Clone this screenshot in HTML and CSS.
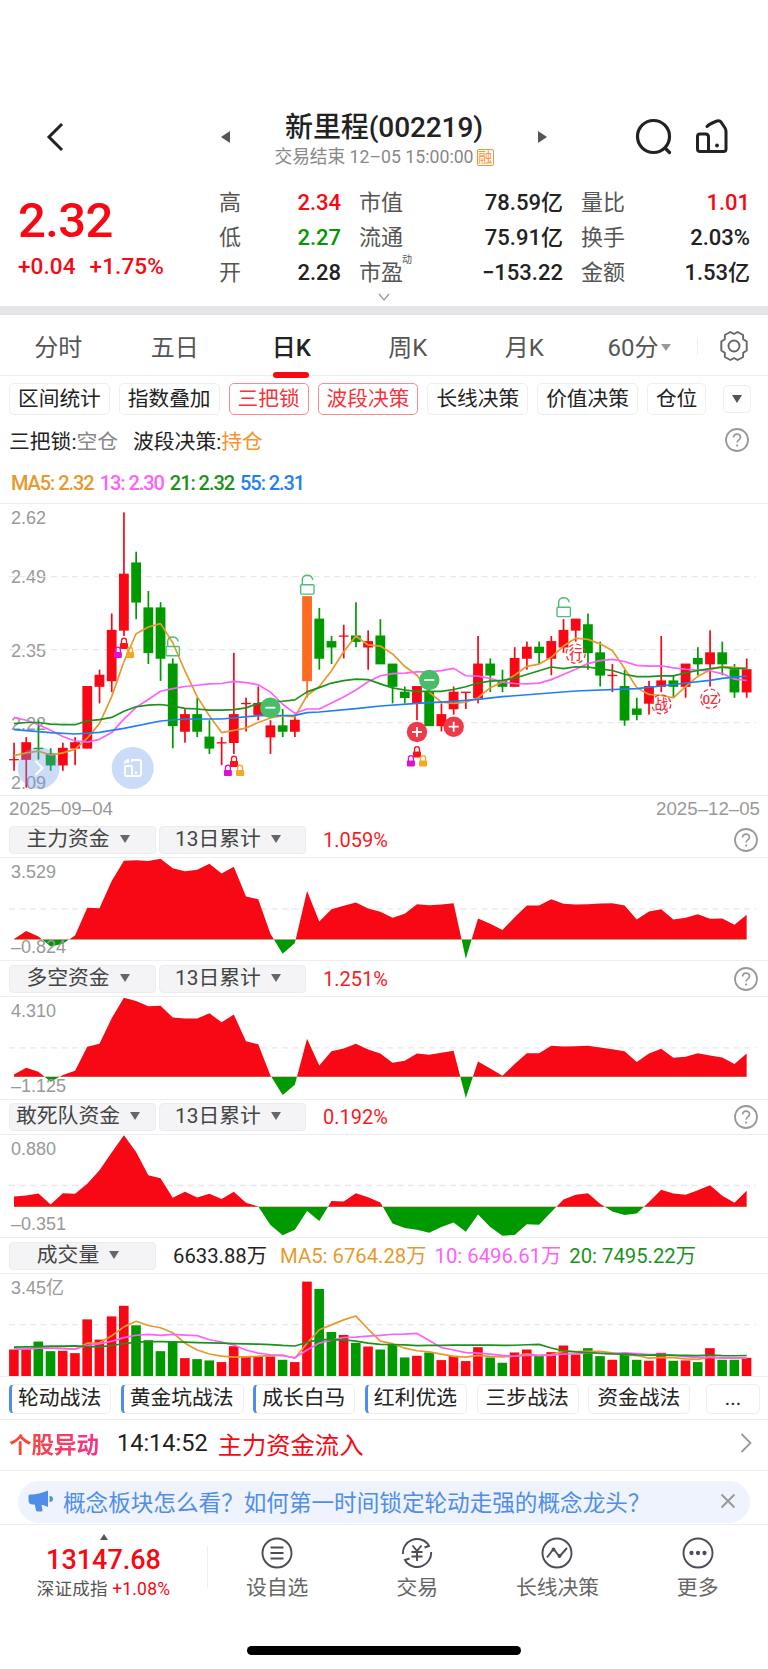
FILE: index.html
```html
<!DOCTYPE html>
<html lang="zh-CN">
<head>
  <meta charset="UTF-8" />
  <meta name="viewport" content="width=device-width, initial-scale=1.0" />
  <title>新里程(002219)</title>
  <link rel="stylesheet" href="styles.css">
</head>
<body>
  <svg class="defs" width="0" height="0">
    <symbol id="help" viewBox="0 0 26 26">
      <circle cx="13" cy="13" r="11" fill="none" stroke="#999" stroke-width="1.8"/>
      <path d="M9.600 10.600c0-4.600 6.900-4.600 6.900-.4 0 2.600-3.400 2.700-3.400 5.400" fill="none" stroke="#999" stroke-width="1.700"/>
      <circle cx="13.100" cy="18.600" r="1.100" fill="#999"/>
    </symbol>
  </svg>

  <header>
    <svg class="back" viewBox="0 0 20 32"><path d="M17 3 4 16l13 13" fill="none" stroke="#222" stroke-width="3"/></svg>
    <i class="tri-left"></i>
    <div class="title">
      <h1>新里程(002219)</h1>
      <p>交易结束 12–05 15:00:00<span class="badge">融</span></p>
    </div>
    <i class="tri-right"></i>
    <svg class="search" viewBox="0 0 38 38"><circle cx="18.500" cy="18.500" r="16" fill="none" stroke="#222" stroke-width="3.200"/><path d="M30 30l4.500 4.500" stroke="#222" stroke-width="3.200" stroke-linecap="round"/></svg>
    <svg class="home" viewBox="0 0 34 36"><path d="M12 8.500q2-2.500 10-5.500 2.500-1 4 1l4 6q1 1.500 1 3.500v17.500q0 2.500-2.500 2.500H5Q2.500 33.500 2.500 31V18.500q0-2.500 2.500-2.500h5.500q3 0 3 3v14.500" fill="none" stroke="#222" stroke-width="3" stroke-linecap="round"/><circle cx="22" cy="27.500" r="1.900" fill="#222"/></svg>
  </header>

  <section class="quote">
    <div class="price">
      <b>2.32</b>
      <p>+0.04<span>+1.75%</span></p>
    </div>
    <dl>
      <dt>高</dt><dd class="red">2.34</dd><dt>市值</dt><dd>78.59亿</dd><dt>量比</dt><dd class="red">1.01</dd>
      <dt>低</dt><dd class="green">2.27</dd><dt>流通</dt><dd>75.91亿</dd><dt>换手</dt><dd>2.03%</dd>
      <dt>开</dt><dd>2.28</dd><dt>市盈<sup>动</sup></dt><dd>−153.22</dd><dt>金额</dt><dd>1.53亿</dd>
    </dl>
    <svg class="more" viewBox="0 0 12 8"><path d="M1 1l5 6 5-6" fill="none" stroke="#999" stroke-width="1.300"/></svg>
  </section>

  <nav class="tabs">
    <a>分时</a><a>五日</a><a class="active">日K</a><a>周K</a><a>月K</a>
    <a class="minute">60分<i></i></a>
    <span class="gear"><svg viewBox="0 0 32 32"><path d="M12.400 2 16 4l3.600-2 5.500 3 .1 4.200 3.500 2.300v9l-3.500 2.300-.1 4.200-5.500 3L16 28l-3.600 2-5.500-3-.1-4.200-3.500-2.300v-9l3.500-2.300.1-4.200z" fill="none" stroke="#666" stroke-width="1.900" stroke-linejoin="round"/><circle cx="16" cy="16" r="5.500" fill="none" stroke="#666" stroke-width="1.900"/></svg></span>
  </nav>

  <div class="chips">
    <span>区间统计</span><span>指数叠加</span><span class="on">三把锁</span><span class="on">波段决策</span><span>长线决策</span><span>价值决策</span><span>仓位</span><span class="drop"><i class="down"></i></span>
  </div>
  <div class="status">
    三把锁:<em>空仓</em><span>波段决策:<em class="hold">持仓</em></span>
    <svg class="help"><use href="#help"/></svg>
  </div>
  <div class="ma">
    <span class="c5">MA5: 2.32</span><span class="c13">13: 2.30</span><span class="c21">21: 2.32</span><span class="c55">55: 2.31</span>
  </div>

  <div class="kline"><svg id="kline" viewBox="0 4 768 291"></svg></div>
  <div class="dates"><span>2025–09–04</span><span>2025–12–05</span></div>

  <section class="panel">
    <div class="bar">
      <span class="pill">主力资金<i class="down"></i></span><span class="pill">13日累计<i class="down"></i></span>
      <b>1.059%</b><svg class="help"><use href="#help"/></svg>
    </div>
    <div class="plot"><span class="max">3.529</span><svg id="fund1" preserveAspectRatio="none"></svg><span class="min">–0.824</span></div>
  </section>
  <section class="panel">
    <div class="bar">
      <span class="pill">多空资金<i class="down"></i></span><span class="pill">13日累计<i class="down"></i></span>
      <b>1.251%</b><svg class="help"><use href="#help"/></svg>
    </div>
    <div class="plot"><span class="max">4.310</span><svg id="fund2" preserveAspectRatio="none"></svg><span class="min">–1.125</span></div>
  </section>
  <section class="panel">
    <div class="bar">
      <span class="pill">敢死队资金<i class="down"></i></span><span class="pill">13日累计<i class="down"></i></span>
      <b>0.192%</b><svg class="help"><use href="#help"/></svg>
    </div>
    <div class="plot"><span class="max">0.880</span><svg id="fund3" preserveAspectRatio="none"></svg><span class="min">–0.351</span></div>
  </section>
  <section class="panel">
    <div class="bar volbar">
      <span class="pill">成交量<i class="down"></i></span>
      <span class="v0">6633.88万</span><span class="c5">MA5: 6764.28万</span><span class="c13">10: 6496.61万</span><span class="c21">20: 7495.22万</span>
    </div>
    <div class="plot"><span class="max">3.45亿</span><svg id="volume" preserveAspectRatio="none"></svg></div>
  </section>

  <div class="chips tactics">
    <span class="hot">轮动战法</span><span class="hot">黄金坑战法</span><span class="hot">成长白马</span><span class="hot">红利优选</span><span>三步战法</span><span>资金战法</span><span class="dots">...</span>
  </div>

  <div class="alert">
    <b>个股异动</b><time>14:14:52</time><span>主力资金流入</span>
    <svg viewBox="0 0 12 20"><path d="M1.500 1l9 9-9 9" fill="none" stroke="#999" stroke-width="1.800"/></svg>
  </div>

  <div class="tip">
    <div>
      <svg class="horn" viewBox="0 0 26 22"><path d="M2 4.500q7 .5 18-4v16.500q-4-2-6.500-2.300l1 5.300q0 1.500-1.500 1.500H9.500q-1.200 0-1.500-1.200L6.800 14.500H4Q.5 14 .5 10V6Q.5 4.500 2 4.500zM21.500 6q3.500 0 3.500 3t-3.500 3z" fill="#508de8"/></svg>
      <p>概念板块怎么看？如何第一时间锁定轮动走强的概念龙头？</p>
      <svg class="close" viewBox="0 0 16 16"><path d="M1.500 1.500l13 13m0-13l-13 13" stroke="#999" stroke-width="1.900"/></svg>
    </div>
  </div>

  <footer>
    <div class="index">
      <i class="up"></i>
      <b>13147.68</b>
      <p>深证成指 <span>+1.08%</span></p>
    </div>
    <a><svg viewBox="0 0 32 32"><circle cx="16" cy="16" r="14.500"/><path d="M9.500 10.500h13M9.500 16h13M9.500 21.500h13"/></svg>设自选</a>
    <a><svg viewBox="0 0 32 32"><path d="M1.800 17A14.300 14.300 0 0 1 26.500 6.500l1.500 2.500-4.500 1.500M30.200 15A14.300 14.300 0 0 1 5.500 25.500L4 23l4.500-1.500M11.500 8.500 16 14l4.500-5.500M16 14v10M10.500 15h11M10.500 19.500h11"/></svg>交易</a>
    <a><svg viewBox="0 0 32 32"><circle cx="16" cy="16" r="14.500"/><path d="M6 20.500l6.500-8.500 6 7.500 7.500-8.500"/><circle cx="12.500" cy="12.500" r="1"/><circle cx="18.500" cy="19" r="1"/></svg>长线决策</a>
    <a><svg viewBox="0 0 32 32"><circle cx="16" cy="16" r="14.500"/><g class="fill"><circle cx="9.500" cy="16" r="1.200"/><circle cx="16" cy="16" r="1.200"/><circle cx="22.500" cy="16" r="1.200"/></g></svg>更多</a>
  </footer>
  <div class="homebar"></div>

  <script src="script.js"></script>
</body>
</html>
```
FILE: styles.css
```css
* {
  box-sizing: border-box;
}
body {
  margin: 0;
  width: 768px;
  height: 1669px;
  overflow: hidden;
  background: #fff;
  color: #222;
  font-family: Roboto, 'Noto Sans CJK SC', sans-serif;
  white-space: nowrap;
}
h1, p, dl, dd {
  margin: 0;
}
em, i {
  font-style: normal;
}
svg {
  display: block;
  flex: none;
}
.defs {
  position: absolute;
}
.red { color: #f70814; }
.green { color: #009a00; }
.c5 { color: #e69a2e; }
.c13 { color: #fb62fb; }
.c21 { color: #1c921c; }
.c55 { color: #1f80f5; }

header {
  height: 182px;
  padding: 104px 0 0 45px;
  display: flex;
  align-items: center;
}
.back {
  width: 20px;
  height: 32px;
  margin-top: -13px;
}
.tri-left, .tri-right {
  border: 6px solid transparent;
  margin-top: -12px;
}
.tri-left {
  border-right: 9px solid #555;
  border-left: 0;
  margin-left: 156px;
}
.tri-right {
  border-left: 9px solid #555;
  border-right: 0;
}
.title {
  width: 308px;
  text-align: center;
  margin-top: -9px;
}
h1 {
  font-size: 28px;
  line-height: 36px;
  font-weight: 500;
  letter-spacing: -0.1px;
}
.title p {
  font-size: 17.700px;
  line-height: 22px;
  color: #888;
}
.badge {
  display: inline-block;
  width: 17px;
  height: 17px;
  border: 1px solid #f9923a;
  border-radius: 2px;
  margin-left: 3px;
  font-size: 14px;
  line-height: 15px;
  color: #f9923a;
  vertical-align: 1px;
}
.search {
  width: 38px;
  height: 38px;
  margin: -12px 0 0 88px;
}
.home {
  width: 34px;
  height: 36px;
  margin: -14px 0 0 22px;
}

.quote {
  position: relative;
  height: 133px;
  display: flex;
  border-bottom: 9px solid #e5e5e7;
}
.price {
  width: 219px;
  padding: 12px 0 0 18px;
  color: #f70814;
}
.price b {
  display: block;
  font-size: 49px;
  line-height: 54px;
  font-weight: 500;
  letter-spacing: -0.6px;
}
.price p {
  font-size: 22.500px;
  line-height: 37px;
  font-weight: 500;
  letter-spacing: 0.1px;
}
.price span {
  margin-left: 14px;
}
dl {
  width: 531px;
  height: 106px;
  padding-top: 3px;
  display: grid;
  grid-template-columns: 50px 72px 64px 158px 62px 1fr;
  grid-template-rows: repeat(3, 35px);
  line-height: 35px;
  font-size: 22px;
}
dt {
  color: #555;
}
dd {
  text-align: right;
  font-weight: 500;
}
dt:nth-of-type(3n+2), dt:nth-of-type(3n) {
  padding-left: 18px;
}
sup {
  position: absolute;
  font-size: 10px;
  line-height: 12px;
  margin: -1px 0 0 -1px;
}
.more {
  position: absolute;
  left: 378px;
  bottom: 5px;
  width: 12px;
  height: 8px;
}

.tabs {
  height: 61px;
  display: flex;
  border-bottom: 1.500px solid #eee;
}
.tabs a {
  width: 116.500px;
  text-align: center;
  font-size: 24px;
  line-height: 66px;
  color: #555;
  position: relative;
}
.tabs .active {
  color: #222;
  font-weight: 500;
}
.tabs .active::after {
  content: '';
  position: absolute;
  left: 40px;
  bottom: -3px;
  width: 36px;
  height: 6px;
  border-radius: 3px;
  background: #f70814;
}
.tabs .minute {
  width: 114px;
}
.minute i {
  display: inline-block;
  border: 5px solid transparent;
  border-top: 7px solid #999;
  border-bottom: 0;
  margin-left: 3px;
  vertical-align: 5px;
}
.gear {
  width: 71px;
  padding-left: 20px;
  height: 18px;
  margin-top: 22px;
  border-left: 1px solid #eee;
}
.gear svg {
  width: 32px;
  height: 32px;
  margin-top: -7px;
}

.chips {
  height: 46px;
  padding: 7px 0 0 9px;
  display: flex;
  gap: 9px;
}
.chips span {
  height: 32px;
  padding: 0 8px;
  border: 1.500px solid #eee;
  border-radius: 5px;
  font-size: 20.700px;
  line-height: 30px;
}
.chips .on {
  color: #f8323d;
  border-color: #fb8a90;
}
.down {
  display: inline-block;
  border: 5px solid transparent;
  border-top: 8px solid #555;
  border-bottom: 0;
}
.chips .drop {
  width: 28px;
  height: 28px;
  margin: 2px 0 0 8px;
  display: flex;
  align-items: center;
  justify-content: center;
}
.status {
  height: 39px;
  padding: 0 18px 3px 9px;
  display: flex;
  align-items: center;
  font-size: 20.800px;
}
.status em {
  color: #888;
}
.status span {
  margin-left: 15px;
}
.status .hold {
  color: #f9922a;
}
.help {
  width: 26px;
  height: 26px;
  margin-left: auto;
}
.ma {
  height: 42px;
  padding-left: 11px;
  display: flex;
  gap: 6px;
  font-size: 20px;
  line-height: 44px;
  font-weight: 500;
  letter-spacing: -1.060px;
}

.kline {
  height: 293px;
  border-top: 1.500px solid #eee;
  border-bottom: 1.500px solid #eee;
}
#kline {
  width: 768px;
  height: 291px;
}
#kline .axis {
  font: 18px 'Liberation Sans', sans-serif;
  fill: #999;
}
.dates {
  height: 26.500px;
  padding: 0 8px 0 9px;
  display: flex;
  justify-content: space-between;
  font: 18.700px/26px 'Liberation Sans', sans-serif;
  color: #999;
}

.panel {
  height: 138.500px;
}
.bar {
  height: 35.500px;
  padding: 1px 9px 0 9px;
  display: flex;
  align-items: center;
  border-bottom: 1.500px solid #eee;
}
.bar b {
  margin-left: 14px;
  font-size: 20px;
  font-weight: 400;
  color: #f81925;
}
.pill {
  width: 147px;
  height: 28px;
  margin-right: 3px;
  padding-right: 9px;
  border: 1px solid #ececef;
  border-radius: 4px;
  background: #f4f4f6;
  font-size: 20.800px;
  line-height: 25px;
  text-align: center;
  color: #444;
}
.pill .down {
  border-top-color: #666;
  margin-left: 10px;
  vertical-align: 3px;
}
.plot {
  position: relative;
  height: 103px;
  border-bottom: 1.500px solid #eee;
}
.plot svg {
  width: 768px;
  height: 102px;
}
.plot span {
  position: absolute;
  left: 11px;
  font: 18px/18px 'Liberation Sans', 'Noto Sans CJK SC', sans-serif;
  color: #999;
}
.max {
  top: 5px;
}
.min {
  bottom: 4px;
}
.volbar {
  font-size: 20.300px;
}
.volbar > span:not(.pill) {
  margin-top: -3px;
}
.volbar .v0 { margin-left: 14px; }
.volbar .c5 { margin-left: 13px; }
.volbar .c13, .volbar .c21 { margin-left: 8px; }

.tactics {
  height: 43px;
  gap: 9.500px;
  border-bottom: 1.500px solid #eee;
}
.tactics span {
  height: 30px;
  line-height: 27px;
  padding-right: 9px;
  font-size: 20.800px;
}
.tactics .hot {
  border-left: 3px solid #508de8;
  padding-left: 6px;
}
.tactics .dots {
  width: 54px;
  margin-left: 6px;
  padding-left: 9px;
  text-align: center;
}

.alert {
  height: 51.500px;
  padding: 0 16px 3px 9px;
  display: flex;
  align-items: center;
  border-bottom: 1.500px solid #eceef4;
  font-size: 24.300px;
}
.alert b {
  font-size: 22.500px;
  background: linear-gradient(90deg, #fb4a2c, #f2348a);
  -webkit-background-clip: text;
  color: transparent;
}
.alert time {
  margin-left: 18px;
  font-size: 23.500px;
}
.alert span {
  margin-left: 10px;
  color: #f70814;
}
.alert svg {
  width: 12px;
  height: 20px;
  margin-left: auto;
}
.tip {
  height: 54px;
  padding: 10px 18px 0;
  border-bottom: 1.500px solid #eee;
}
.tip div {
  height: 42px;
  padding: 0 14px 2px 10px;
  display: flex;
  align-items: center;
  border-radius: 21px;
  background: #eef3fd;
  color: #508de8;
  font-size: 22.600px;
}
.tip p {
  margin-left: 9px;
  font-family: 'Noto Sans CJK SC', sans-serif;
}
.horn {
  width: 26px;
  height: 22px;
}
.close {
  width: 16px;
  height: 16px;
  margin-left: auto;
}

footer {
  height: 121px;
  display: flex;
}
.index {
  width: 207px;
  height: 90px;
  text-align: center;
  color: #f70814;
}
.up {
  display: block;
  width: 0;
  margin: 9px auto 0;
  border: 4px solid transparent;
  border-bottom: 6px solid #555;
  border-top: 0;
}
.index b {
  display: block;
  font-size: 27px;
  line-height: 40px;
  font-weight: 500;
}
.index p {
  font-size: 17.500px;
  line-height: 18px;
  letter-spacing: 0.200px;
  color: #555;
}
.index span {
  color: #f70814;
}
footer a {
  width: 140.200px;
  padding-top: 12px;
  text-align: center;
  font-size: 20.800px;
  line-height: 34px;
  color: #666;
}
footer a svg {
  width: 32px;
  height: 32px;
  margin: 0 auto 2px;
  fill: none;
  stroke: #4c4c58;
  stroke-width: 1.900;
}
footer .fill circle {
  fill: #4c4c58;
}
.index + a {
  background: linear-gradient(#eee, #eee) 0 21px / 1px 42px no-repeat;
}
.homebar {
  width: 274px;
  height: 9px;
  margin: 0 auto;
  border-radius: 5px;
  background: #000;
}
```
FILE: script.js
```js
const RED = "#f70814";
const GREEN = "#009a00";
const xAt = i => 14 + i * 12.211;

// [colour, body top, body bottom, high, low] in cents below 2.60
const candles = [
  ["r",44,44,41,46],["r",41,44,40,49],["g",42,42,37,44],["g",43,45,42,46],["r",42,45,41,46],["r",41,42,40,45],
  ["r",31,42,31,42],["r",29,31,28,34],["r",21,30,18,32],["r",11,21,0,22],["g",9,16,7,19],["g",17,25,14,27],
  ["g",17,26,16,30],["g",27,38,26,42],["r",36,39,35,41],["g",36,39,33,40],["g",40,42,37,43],["r",41,41,40,45],
  ["r",36,41,25,43],["r",34,34,33,39],["r",34,36,31,37],["r",38,40,37,43],["g",38,39,35,40],["r",37,39,36,40],
  ["o",15,30,15,33],["g",19,26,17,28],["g",23,24,22,27],["r",22,22,20,26],["g",22,23,16,24],["r",23,24,21,28],
  ["g",22,27,19,27],["g",27,31,27,34],["g",32,33,31,34],["r",31,34,31,37],["g",32,38,31,38],["r",36,38,34,39],
  ["r",32,35,31,36],["r",32,32,32,35],["r",27,33,22,34],["g",27,29,26,32],["g",30,31,28,32],["r",26,31,24,31],
  ["r",24,26,23,28],["g",24,25,23,27],["r",23,26,22,29],["r",21,24,19,25],["r",19,21,19,23],["g",20,25,18,28],
  ["g",25,29,23,31],["r",29,29,27,32],["g",31,37,28,38],["g",35,36,33,37],["r",31,34,30,36],["r",30,31,22,32],
  ["g",30,31,29,33],["r",27,31,27,33],["g",26,27,24,29],["r",25,27,21,31],["g",25,27,23,29],["g",28,32,27,33],
  ["r",28,32,26,33]
];
const colors = { r: RED, g: GREEN, o: "#ff6a22" };
const yAt = n => 12.4 + n * 5.617;

// moving average, lead holds the values before the window is full
function average(values, size, lead) {
  return values.map((v, i) => {
    if (i < size - 1) return lead[i];
    return values.slice(i - size + 1, i + 1).reduce((a, b) => a + b) / size;
  });
}
function line(points, color) {
  return `<polyline points="${points.map(p => p.join(",")).join(" ")}" fill="none" stroke="${color}" stroke-width="1.7" stroke-linejoin="round" vector-effect="non-scaling-stroke"/>`;
}

function lock(x, y, color) {
  return `<g transform="translate(${x} ${y})"><path d="M-2.500 0v-2.500a2.500 2.800 0 0 1 5 0V0" fill="none" stroke="${color}" stroke-width="1.300"/><rect x="-4" y="-.5" width="8" height="6" rx="1" fill="${color}"/></g>`;
}
function locks(x, y) {
  return lock(x, y, "#ff1018") + lock(x - 6.100, y + 9, "#dd12cf") + lock(x + 6.100, y + 9, "#f6a623");
}
function unlock(x, y) {
  return `<g transform="translate(${x} ${y})" fill="none" stroke="#4fc071" stroke-width="1.400"><rect x="-6.700" y="0" width="13.400" height="9.300" rx="1"/><path d="M-5 0v-5q0-4.500 5-4.500 4.500 0 5.500 4.500"/></g>`;
}
function sign(x, y, plus) {
  const d = plus ? "M-5 0H5M0-5V5" : "M-5 0H5";
  return `<g transform="translate(${x} ${y})"><circle r="10.200" fill="${plus ? "#ee3b4b" : "#48bd68"}"/><path d="${d}" stroke="#fff" stroke-width="1.800"/></g>`;
}
function stamp(x, y, text) {
  return `<g transform="translate(${x} ${y})"><circle r="9.500" fill="none" stroke="#f03848" stroke-width="1.300" stroke-dasharray="4.500 3"/><text y="4.800" text-anchor="middle" font-size="13.500" font-weight="500" fill="#f03848">${text}</text></g>`;
}

function drawKline() {
  let s = "";
  [[2.62, 23.500], [2.49, 83], [2.35, 156.500], [2.22, 229.500], [2.09, 288.500]].forEach(([v, y]) => {
    s += `<text class="axis" x="11" y="${y}">${v}</text>`;
  });
  [76.700, 149.700, 222.700].forEach(y => {
    s += `<path d="M9 ${y}H756" stroke="#e8e8ea" stroke-width="1.300" stroke-dasharray="6 4.500"/>`;
  });
  candles.forEach(([c, top, bottom, high, low], i) => {
    const x = xAt(i);
    s += `<rect x="${x - 0.8}" y="${yAt(high)}" width="1.700" height="${yAt(low) - yAt(high)}" fill="${colors[c]}"/>`;
    s += `<rect x="${x - 4.900}" y="${yAt(top) - 0.500}" width="9.800" height="${Math.max(yAt(bottom) - yAt(top), 0.500) + 0.800}" fill="${colors[c]}"/>`;
  });

  const closes = candles.map(c => c[0] === "g" ? c[2] : c[1]);
  const toPoints = list => list.map((n, i) => [xAt(i), yAt(n)]);
  s += line(toPoints(average(closes, 5, [43.3, 42.8, 42.5, 43.2])), "#e69a2e");
  s += line(toPoints(average(closes, 13, [36.5, 37, 37.8, 38.8, 39.9, 40.7, 40.9, 40.4, 39.2, 36.8, 34.7, 33.3])), "#fb62fb");
  s += line(toPoints(average(closes, 21, [37.6, 37.4, 37.4, 37.7, 37.8, 37.8, 37.1, 36.9, 36.5, 35.4, 34.6, 34.3, 34.2, 34.5, 34.9, 35, 35.2, 35.2, 35.1, 34.8])), "#1c921c");
  const slow = [[0,229.7],[3,232.7],[5,234],[7,232.3],[9,228.3],[12,221],[14,219],[17,219],[20,215.7],[23,215.3],[24,212.7],[25,212],[28,208.7],[30,206],[33,203.3],[36,201.3],[38,199.3],[40,196.7],[46,191],[51,188.7],[53,186],[55,183],[57,180.3],[58,178.3],[60,176]];
  s += line(slow.map(([i, y]) => [xAt(i), y]), "#1f80f5");

  s += locks(124, 143.500) + locks(234, 261.500) + locks(417, 252);
  s += unlock(172.700, 146.500) + unlock(307.300, 84.800) + unlock(563.700, 107.300);
  s += sign(270.300, 207.700, false) + sign(429.300, 180, false);
  s += sign(417, 232, true) + sign(453.700, 226.700, true);
  s += stamp(575.700, 153.700, "行") + stamp(661.300, 204.300, "战") + stamp(710.300, 198.700, "0Z");

  // floating buttons
  s += `<g fill="rgba(105,155,235,.35)"><circle cx="38.700" cy="268" r="21"/><circle cx="132.700" cy="268" r="21"/></g>`;
  s += `<g fill="none" stroke="#fff" stroke-width="1.900"><path d="M35.500 261l7 7-7 7"/><rect x="125" y="266" width="7" height="10" rx="1"/><path d="M124.500 263.500q1-2.500 3.500-3.500v3M132 262v-2h7q2 0 2 2V274q0 2-2 2h-7M136 271.500v2.500"/></g>`;
  document.getElementById("kline").innerHTML = s;
}

function drawFund(id, top, zero, mid, values) {
  const svg = document.getElementById(id);
  svg.setAttribute("viewBox", `0 ${top} 768 307`);
  const points = values.map((v, i) => `${xAt(i)},${v}`).join(" ");
  const area = `${xAt(0)},${zero} ${points} ${xAt(60)},${zero}`;
  svg.innerHTML = `
    <clipPath id="${id}-a"><rect x="0" y="0" width="768" height="${zero + 1}"/></clipPath>
    <clipPath id="${id}-b"><rect x="0" y="${zero}" width="768" height="200"/></clipPath>
    <path d="M9 ${mid}H756" stroke="#e8e8ea" stroke-width="1.300" stroke-dasharray="6 4.500" vector-effect="non-scaling-stroke"/>
    <polygon points="${area}" fill="${RED}" clip-path="url(#${id}-a)"/>
    <polygon points="${area}" fill="${GREEN}" clip-path="url(#${id}-b)"/>`;
}

function drawVolume() {
  const tops = [343,342,319,348,347,354,252,313,243,211,270,315,348,318,369,372,376,381,333,364,364,364,374,381,138,160,290,299,323,334,343,328,367,362,352,375,362,378,336,367,383,352,343,362,351,331,358,339,363,374,356,374,377,353,377,376,381,339,374,374,368];
  const svg = document.getElementById("volume");
  svg.setAttribute("viewBox", "0 115 768 308");
  let s = `<path d="M9 268H756" stroke="#e8e8ea" stroke-width="1.300" stroke-dasharray="6 4.500" vector-effect="non-scaling-stroke"/>`;
  tops.forEach((y, i) => {
    s += `<rect x="${xAt(i) - 4.900}" y="${y}" width="9.600" height="${424 - y}" fill="${candles[i][0] === "g" ? GREEN : RED}"/>`;
  });
  const toPoints = list => list.map((y, i) => [xAt(i), y]);
  s += line(toPoints(average(tops, 5, [342, 341, 339, 339])), "#e69a2e");
  s += line(toPoints(average(tops, 10, [342, 341, 339, 339, 340, 342, 331, 326, 318])), "#fb62fb");
  s += line(toPoints(average(tops, 20, [336, 335, 334, 333, 333, 332, 334, 335, 331, 325, 321, 319, 319, 320, 321, 322, 323, 324, 325])), "#1c921c");
  svg.innerHTML = s;
}

drawKline();
drawFund("fund1", 114, 359, 267, [358,334,350,380,372,347,264,265,183,122,121,123,116,145,154,149,131,161,140,230,238,342,402,370,213,305,268,258,248,266,276,294,282,253,256,254,250,417,296,312,331,292,257,257,238,252,254,253,251,250,257,299,275,268,299,294,283,297,296,315,285]);
drawFund("fund2", 109, 349, 262, [342,322,334,364,344,331,259,250,173,111,121,137,135,171,174,174,158,185,162,242,251,345,404,373,235,315,272,264,250,267,279,307,301,279,283,277,271,413,303,324,346,311,278,278,256,258,257,256,261,266,272,305,279,265,292,289,278,285,291,311,279]);
drawFund("fund3", 105, 321, 257, [290,287,281,314,280,282,252,211,158,106,156,226,235,294,276,293,282,298,276,309,320,376,407,390,334,364,304,305,280,292,308,371,385,390,399,382,368,396,344,382,408,406,374,375,337,299,285,280,312,335,346,341,307,270,281,285,271,256,288,309,273]);
drawVolume();
```
